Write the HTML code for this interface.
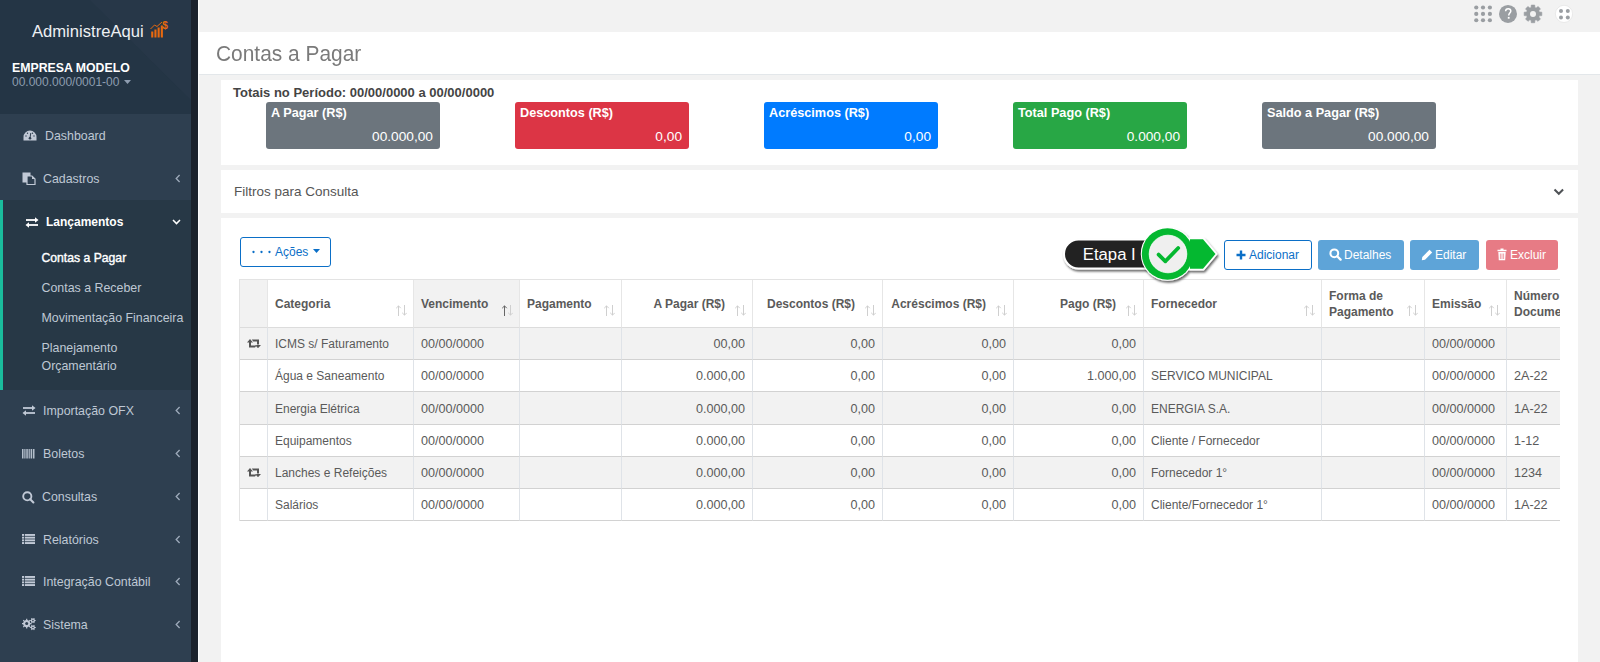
<!DOCTYPE html>
<html><head><meta charset="utf-8">
<style>
*{box-sizing:border-box;margin:0;padding:0}
html,body{width:1600px;height:662px;overflow:hidden;background:#f2f2f2;font-family:"Liberation Sans",sans-serif;position:relative}
.abs{position:absolute}
#sb{position:absolute;left:0;top:0;width:191px;height:662px;background:#2e3f50}
#sbh{position:absolute;left:0;top:0;width:191px;height:114px;background:#243545;overflow:hidden}
#strip{position:absolute;left:191px;top:0;width:7px;height:662px;background:#1b222c}
#wline{position:absolute;left:198px;top:0;width:1px;height:662px;background:#fbfbfb}
.mi{position:absolute;left:0;width:191px;height:43px;color:#bfc8d4;font-size:12.4px;line-height:45px}
.mi .t{position:absolute;left:43px;top:0}
.mi .ic{position:absolute;left:22px;top:15px;width:14px;height:14px}
.mi .ch{position:absolute;left:175px;top:17px;width:6px;height:9px}
.sub{position:absolute;left:41.5px;font-size:12.4px;color:#bfc8d4;line-height:18px;white-space:nowrap}
#hdr{position:absolute;left:199px;top:32px;width:1401px;height:43px;background:#fff;border-bottom:1px solid #e3e7ea}
.panel{position:absolute;left:221px;width:1357px;background:#fff}
.card{position:absolute;top:102px;width:174px;height:47px;border-radius:3px;color:#fff}
.card .ct{position:absolute;left:5px;top:4px;font-size:12.7px;font-weight:bold}
.card .cv{position:absolute;right:7px;top:26.5px;font-size:13.7px}
.btn{position:absolute;top:240px;height:30px;border-radius:3px;font-size:12px;line-height:30px;color:#fff;white-space:nowrap}
table{border-collapse:separate;border-spacing:0;table-layout:fixed}
#tw{position:absolute;left:239px;top:279px;width:1321px;height:260px;overflow:hidden}
td.n{font-size:12.6px}
td,th{border-right:1px solid #dfe3e8;border-bottom:1px solid #d2d2d2;height:32px;font-size:12px;color:#5a5a5a;white-space:nowrap;overflow:hidden;padding:1px 7px 0 7px;vertical-align:middle}
th{height:48px;font-weight:bold;text-align:left;position:relative;line-height:16px;border-bottom:1px solid #dcdcdc;border-right-color:#e6e6e6;padding-right:27px}
th.r,td.r{text-align:right}
tr.g td,th.g{background:#f2f2f2}
td.ic{padding:0;text-align:center}
.si{position:absolute;right:6px;bottom:11px;width:12px;height:11px}
</style></head><body>

<!-- SIDEBAR -->
<div id="sb">
  <div id="sbh">
    <svg class="abs" style="left:0;top:0" width="191" height="114"><polygon points="90,0 191,0 191,114 205,114" fill="#29394a" opacity="0.7"/></svg>
    <div class="abs" style="left:32px;top:21.5px;font-size:16.6px;color:#eef0f3;white-space:nowrap">AdministreAqui</div>
    <svg class="abs" style="left:149px;top:19px" width="20" height="20" viewBox="0 0 20 20">
      <rect x="2.2" y="12.5" width="2.1" height="6" fill="#e8690f"/>
      <rect x="5.4" y="10.5" width="2.1" height="8" fill="#e8690f"/>
      <rect x="8.6" y="8.5" width="2.1" height="10" fill="#e8690f"/>
      <rect x="11.8" y="6.5" width="2.1" height="12" fill="#e8690f"/>
      <polyline points="1.5,10 5.5,6 8,7.5 13,3" stroke="#e8690f" stroke-width="1" fill="none"/>
      <text x="13.2" y="10" font-size="10" font-weight="bold" fill="#e8690f" font-family="Liberation Sans">$</text>
    </svg>
    <div class="abs" style="left:12px;top:60.5px;font-size:12.3px;font-weight:bold;color:#fff;white-space:nowrap">EMPRESA MODELO</div>
    <div class="abs" style="left:12px;top:75px;font-size:12px;color:#8e9db0;white-space:nowrap">00.000.000/0001-00</div>
    <svg class="abs" style="left:124px;top:80px" width="8" height="5"><polygon points="0,0 7,0 3.5,4" fill="#8e9db0"/></svg>
  </div>
  <div id="menu">
  <div class="mi" style="top:114px"><svg class="ic" style="left:23px;top:16px;width:14px;height:11px" viewBox="0 0 14 11"><path d="M7,0.5 A6.5,6.5 0 0 0 0.5,7 L0.5,10.5 L13.5,10.5 L13.5,7 A6.5,6.5 0 0 0 7,0.5 Z" fill="#c1c9d6"/><circle cx="7" cy="8.2" r="1.3" fill="#2e3f50"/><line x1="7" y1="8" x2="7.8" y2="3" stroke="#2f3e4f" stroke-width="1"/><circle cx="3" cy="6" r=".7" fill="#2e3f50"/><circle cx="11" cy="6" r=".7" fill="#2e3f50"/><circle cx="4.5" cy="3.3" r=".7" fill="#2e3f50"/><circle cx="9.5" cy="3.3" r=".7" fill="#2e3f50"/></svg><span class="t" style="left:45px">Dashboard</span></div>
  <div class="mi" style="top:157px"><svg class="ic" style="left:22px;top:15px;width:14px;height:13px" viewBox="0 0 14 13"><rect x="0.5" y="0.5" width="8" height="10" fill="#c1c9d6"/><path d="M5,4 L10,4 L13,7 L13,12.5 L5,12.5 Z" fill="#2e3f50" stroke="#c1c9d6" stroke-width="1.2"/><path d="M10,4 L10,7 L13,7" fill="#c1c9d6"/></svg><span class="t">Cadastros</span><svg class="ch" viewBox="0 0 6 9"><polyline points="4.6,1 1.2,4.5 4.6,8" stroke="#9eabbb" stroke-width="1.3" fill="none"/></svg></div>
  <div class="abs" style="left:0;top:200px;width:191px;height:190px;background:#273846"></div>
  <div class="abs" style="left:0;top:200px;width:3px;height:190px;background:#1abc9c"></div>
  <div class="mi" style="top:200px;color:#fff;font-weight:bold;font-size:12px"><svg class="ic" style="left:25px;top:17px;width:14px;height:11px" viewBox="0 0 14 11"><path d="M1,3 H11" stroke="#fff" stroke-width="1.8"/><path d="M10,0.2 L13.5,3 L10,5.8 Z" fill="#fff"/><path d="M3,8 H13" stroke="#fff" stroke-width="1.8"/><path d="M4,5.2 L0.5,8 L4,10.8 Z" fill="#fff"/></svg><span class="t" style="left:46px">Lançamentos</span><svg class="ch" style="left:172px;top:19px;width:9px;height:6px" viewBox="0 0 9 6"><polyline points="1,1 4.5,4.6 8,1" stroke="#fff" stroke-width="1.5" fill="none"/></svg></div>
  <div class="sub" style="top:249px;color:#fff;font-size:12.2px;-webkit-text-stroke:0.4px #fff">Contas a Pagar</div>
  <div class="sub" style="top:279px">Contas a Receber</div>
  <div class="sub" style="top:309px">Movimentação Financeira</div>
  <div class="sub" style="top:338.5px">Planejamento</div>
  <div class="sub" style="top:356.5px">Orçamentário</div>
  <div class="mi" style="top:389px"><svg class="ic" style="left:22px;top:16px;width:14px;height:11px" viewBox="0 0 14 11"><path d="M1,3 H11" stroke="#c1c9d6" stroke-width="1.8"/><path d="M10,0.2 L13.5,3 L10,5.8 Z" fill="#c1c9d6"/><path d="M3,8 H13" stroke="#c1c9d6" stroke-width="1.8"/><path d="M4,5.2 L0.5,8 L4,10.8 Z" fill="#c1c9d6"/></svg><span class="t">Importação OFX</span><svg class="ch" viewBox="0 0 6 9"><polyline points="4.6,1 1.2,4.5 4.6,8" stroke="#9eabbb" stroke-width="1.3" fill="none"/></svg></div>
  <div class="mi" style="top:432px"><svg class="ic" style="left:22px;top:16.5px;width:13px;height:10px" viewBox="0 0 13 10"><g fill="#b4bfcc"><rect x="0" y="0" width="1.5" height="9.5"/><rect x="2.3" y="0" width="1.2" height="9.5"/><rect x="4.3" y="0" width="1.5" height="9.5"/><rect x="6.6" y="0" width="1.2" height="9.5"/><rect x="8.6" y="0" width="1.5" height="9.5"/><rect x="10.9" y="0" width="1.6" height="9.5"/></g></svg><span class="t">Boletos</span><svg class="ch" viewBox="0 0 6 9"><polyline points="4.6,1 1.2,4.5 4.6,8" stroke="#9eabbb" stroke-width="1.3" fill="none"/></svg></div>
  <div class="mi" style="top:475px"><svg class="ic" style="left:22px;top:16px;width:13px;height:13px" viewBox="0 0 13 13"><circle cx="5.3" cy="5.3" r="4.1" stroke="#c1c9d6" stroke-width="1.9" fill="none"/><line x1="8.2" y1="8.2" x2="11.4" y2="11.4" stroke="#c1c9d6" stroke-width="2.1" stroke-linecap="round"/></svg><span class="t" style="left:42px">Consultas</span><svg class="ch" viewBox="0 0 6 9"><polyline points="4.6,1 1.2,4.5 4.6,8" stroke="#9eabbb" stroke-width="1.3" fill="none"/></svg></div>
  <div class="mi" style="top:518px"><svg class="ic" style="left:22px;top:16px;width:13px;height:11px" viewBox="0 0 13 11"><g fill="#c1c9d6"><rect x="0" y="0" width="2.2" height="1.9"/><rect x="3" y="0" width="10" height="1.9"/><rect x="0" y="2.7" width="2.2" height="1.9"/><rect x="3" y="2.7" width="10" height="1.9"/><rect x="0" y="5.4" width="2.2" height="1.9"/><rect x="3" y="5.4" width="10" height="1.9"/><rect x="0" y="8.1" width="2.2" height="1.9"/><rect x="3" y="8.1" width="10" height="1.9"/></g></svg><span class="t">Relatórios</span><svg class="ch" viewBox="0 0 6 9"><polyline points="4.6,1 1.2,4.5 4.6,8" stroke="#9eabbb" stroke-width="1.3" fill="none"/></svg></div>
  <div class="mi" style="top:560px"><svg class="ic" style="left:22px;top:16px;width:13px;height:11px" viewBox="0 0 13 11"><g fill="#c1c9d6"><rect x="0" y="0" width="2.2" height="1.9"/><rect x="3" y="0" width="10" height="1.9"/><rect x="0" y="2.7" width="2.2" height="1.9"/><rect x="3" y="2.7" width="10" height="1.9"/><rect x="0" y="5.4" width="2.2" height="1.9"/><rect x="3" y="5.4" width="10" height="1.9"/><rect x="0" y="8.1" width="2.2" height="1.9"/><rect x="3" y="8.1" width="10" height="1.9"/></g></svg><span class="t">Integração Contábil</span><svg class="ch" viewBox="0 0 6 9"><polyline points="4.6,1 1.2,4.5 4.6,8" stroke="#9eabbb" stroke-width="1.3" fill="none"/></svg></div>
  <div class="mi" style="top:603px"><svg class="ic" style="left:22px;top:15px;width:14px;height:13px" viewBox="0 0 14 13"><path d="M8.03,4.22 L8.25,4.98 L9.57,5.02 L9.57,6.18 L8.25,6.22 L8.03,6.98 L7.65,7.67 L8.55,8.63 L7.73,9.45 L6.77,8.55 L6.08,8.93 L5.32,9.15 L5.28,10.47 L4.12,10.47 L4.08,9.15 L3.32,8.93 L2.63,8.55 L1.67,9.45 L0.85,8.63 L1.75,7.67 L1.37,6.98 L1.15,6.22 L-0.17,6.18 L-0.17,5.02 L1.15,4.98 L1.37,4.22 L1.75,3.53 L0.85,2.57 L1.67,1.75 L2.63,2.65 L3.32,2.27 L4.08,2.05 L4.12,0.73 L5.28,0.73 L5.32,2.05 L6.08,2.27 L6.77,2.65 L7.73,1.75 L8.55,2.57 L7.65,3.53 Z" fill="#c1c9d6"/><circle cx="4.7" cy="5.6" r="1.5" fill="#2e3f50"/><path d="M12.72,1.55 L12.94,2.12 L13.76,2.15 L13.76,3.05 L12.94,3.08 L12.72,3.65 L12.34,4.13 L12.73,4.85 L11.94,5.31 L11.51,4.61 L10.90,4.70 L10.29,4.61 L9.86,5.31 L9.07,4.85 L9.46,4.13 L9.08,3.65 L8.86,3.08 L8.04,3.05 L8.04,2.15 L8.86,2.12 L9.08,1.55 L9.46,1.07 L9.07,0.35 L9.86,-0.11 L10.29,0.59 L10.90,0.50 L11.51,0.59 L11.94,-0.11 L12.73,0.35 L12.34,1.07 Z" fill="#c1c9d6"/><circle cx="10.9" cy="2.6" r="0.8" fill="#2e3f50"/><path d="M12.72,8.45 L12.94,9.02 L13.76,9.05 L13.76,9.95 L12.94,9.98 L12.72,10.55 L12.34,11.03 L12.73,11.75 L11.94,12.21 L11.51,11.51 L10.90,11.60 L10.29,11.51 L9.86,12.21 L9.07,11.75 L9.46,11.03 L9.08,10.55 L8.86,9.98 L8.04,9.95 L8.04,9.05 L8.86,9.02 L9.08,8.45 L9.46,7.97 L9.07,7.25 L9.86,6.79 L10.29,7.49 L10.90,7.40 L11.51,7.49 L11.94,6.79 L12.73,7.25 L12.34,7.97 Z" fill="#c1c9d6"/><circle cx="10.9" cy="9.5" r="0.8" fill="#2e3f50"/></svg><span class="t">Sistema</span><svg class="ch" viewBox="0 0 6 9"><polyline points="4.6,1 1.2,4.5 4.6,8" stroke="#9eabbb" stroke-width="1.3" fill="none"/></svg></div>
</div>
</div>
<div id="strip"></div>
<div id="wline"></div>

<!-- TOPBAR + HEADER -->
<div id="hdr"><div class="abs" style="left:17px;top:8.5px;font-size:22px;color:#7a7a7a;white-space:nowrap;transform:scaleX(0.95);transform-origin:0 0">Contas a Pagar</div></div>

<!-- PANELS -->
<div class="panel" style="top:80px;height:85px"></div>
<div class="panel" style="top:170px;height:43px"></div>
<div class="panel" style="top:218px;height:444px"></div>


<!-- TOP ICONS -->
<svg class="abs" style="left:1470px;top:3px" width="104" height="22" viewBox="0 0 104 22">
  <g fill="#9a9ea2">
    <circle cx="6.25" cy="4.5" r="2.1"/><circle cx="13" cy="4.5" r="2.1"/><circle cx="19.9" cy="4.5" r="2.1"/>
    <circle cx="6.25" cy="10.9" r="2.1"/><circle cx="13" cy="10.9" r="2.1"/><circle cx="19.9" cy="10.9" r="2.1"/>
    <circle cx="6.25" cy="17.25" r="2.1"/><circle cx="13" cy="17.25" r="2.1"/><circle cx="19.9" cy="17.25" r="2.1"/>
    <circle cx="38" cy="10.9" r="9"/>
  </g>
  <path d="M35.6,8.3 C35.6,6.6 36.7,5.7 38.2,5.7 C39.8,5.7 40.8,6.6 40.8,8 C40.8,9.9 38.7,10.2 38.7,12.4" stroke="#fff" stroke-width="1.5" fill="none"/>
  <rect x="37.8" y="13.9" width="1.8" height="1.8" fill="#fff"/>
  <g transform="translate(63,10.9)">
    <path fill="#9a9ea2" stroke="#9a9ea2" stroke-width="0.6" stroke-linejoin="round" d="M-2.53,-6.10 L-1.93,-6.31 L-1.72,-8.83 L1.72,-8.83 L1.93,-6.31 L2.53,-6.10 L3.10,-5.83 L5.03,-7.46 L7.46,-5.03 L5.83,-3.10 L6.10,-2.53 L6.31,-1.93 L8.83,-1.72 L8.83,1.72 L6.31,1.93 L6.10,2.53 L5.83,3.10 L7.46,5.03 L5.03,7.46 L3.10,5.83 L2.53,6.10 L1.93,6.31 L1.72,8.83 L-1.72,8.83 L-1.93,6.31 L-2.53,6.10 L-3.10,5.83 L-5.03,7.46 L-7.46,5.03 L-5.83,3.10 L-6.10,2.53 L-6.31,1.93 L-8.83,1.72 L-8.83,-1.72 L-6.31,-1.93 L-6.10,-2.53 L-5.83,-3.10 L-7.46,-5.03 L-5.03,-7.46 L-3.10,-5.83 Z"/>
    <circle r="3" fill="#f2f2f2"/>
  </g>
  <circle cx="94" cy="10.9" r="8.6" fill="#fff" stroke="#e2e2e2" stroke-width="0.7"/>
  <g fill="#9a9ea2"><circle cx="91" cy="8.1" r="2"/><circle cx="97.8" cy="8.1" r="2"/><circle cx="91" cy="14.4" r="2"/><circle cx="97.8" cy="14.4" r="2"/></g>
</svg>

<!-- TOTALS -->
<div class="abs" style="left:233px;top:85px;font-size:13px;font-weight:bold;color:#444;white-space:nowrap">Totais no Período: 00/00/0000 a 00/00/0000</div>
<div class="card" style="left:266px;background:#6c757d"><div class="ct">A Pagar (R$)</div><div class="cv">00.000,00</div></div>
<div class="card" style="left:515px;background:#dc3545"><div class="ct">Descontos (R$)</div><div class="cv">0,00</div></div>
<div class="card" style="left:764px;background:#007bff"><div class="ct">Acréscimos (R$)</div><div class="cv">0,00</div></div>
<div class="card" style="left:1013px;background:#28a745"><div class="ct">Total Pago (R$)</div><div class="cv">0.000,00</div></div>
<div class="card" style="left:1262px;background:#6c757d"><div class="ct">Saldo a Pagar (R$)</div><div class="cv">00.000,00</div></div>

<!-- FILTERS -->
<div class="abs" style="left:234px;top:184px;font-size:13.5px;color:#555;white-space:nowrap">Filtros para Consulta</div>
<svg class="abs" style="left:1552.5px;top:188px" width="12" height="8" viewBox="0 0 12 8"><polyline points="1.5,1.5 5.8,5.8 10.1,1.5" stroke="#4f5256" stroke-width="2" fill="none"/></svg>

<!-- TOOLBAR -->
<div class="abs" style="left:240px;top:237px;width:91px;height:30px;border:1px solid #0b6fc7;border-radius:3px;color:#0b6fc7;font-size:12px;line-height:28px;white-space:nowrap">
  <svg class="abs" style="left:11px;top:12px" width="20" height="4"><circle cx="1.5" cy="2" r="1.15" fill="#0b6fc7"/><circle cx="9.5" cy="2" r="1.15" fill="#0b6fc7"/><circle cx="17.5" cy="2" r="1.15" fill="#0b6fc7"/></svg>
  <span class="abs" style="left:34px;top:0">Ações</span>
  <svg class="abs" style="left:72px;top:11px" width="8" height="5"><polygon points="0,0 7,0 3.5,4" fill="#0b6fc7"/></svg>
</div>

<div class="btn" style="left:1224px;width:88px;border:1px solid #0b6fc7;color:#0b6fc7;background:#fff;line-height:28px">
  <svg class="abs" style="left:11px;top:9px" width="10" height="10"><path d="M5,0.5 V9.5 M0.5,5 H9.5" stroke="#0b6fc7" stroke-width="2.4"/></svg>
  <span class="abs" style="left:24px;top:0">Adicionar</span>
</div>
<div class="btn" style="left:1318px;width:86px;background:#5ea4d8">
  <svg class="abs" style="left:11px;top:8px" width="13" height="13" viewBox="0 0 13 13"><circle cx="5.3" cy="5.3" r="3.9" stroke="#fff" stroke-width="2" fill="none"/><line x1="8.2" y1="8.2" x2="11.6" y2="11.6" stroke="#fff" stroke-width="2.3" stroke-linecap="round"/></svg>
  <span class="abs" style="left:26px;top:0">Detalhes</span>
</div>
<div class="btn" style="left:1410px;width:69px;background:#5ea4d8">
  <svg class="abs" style="left:11px;top:9px" width="12" height="12" viewBox="0 0 12 12"><path d="M8.5,0.8 L11.2,3.5 L4,10.7 L0.8,11.2 L1.3,8 Z" fill="#fff"/></svg>
  <span class="abs" style="left:25px;top:0">Editar</span>
</div>
<div class="btn" style="left:1486px;width:72px;background:#e77b85">
  <svg class="abs" style="left:11px;top:8px" width="10" height="13" viewBox="0 0 10 13"><path d="M3.5,0.5 H6.5 V1.8 H9.5 V3.3 H0.5 V1.8 H3.5 Z" fill="#fff"/><path d="M1.3,4 H8.7 L8.2,12.3 H1.8 Z" fill="#fff"/><path d="M3.4,5.5 V11 M5,5.5 V11 M6.6,5.5 V11" stroke="#e77b85" stroke-width="0.7"/></svg>
  <span class="abs" style="left:24px;top:0">Excluir</span>
</div>

<!-- TABLE -->
<div id="tw"><table style="width:1388px;border-left:1px solid #e3e3e3;border-top:1px solid #e3e3e3"><colgroup><col style="width:28px"><col style="width:146px"><col style="width:106px"><col style="width:102px"><col style="width:131px"><col style="width:130px"><col style="width:131px"><col style="width:130px"><col style="width:178px"><col style="width:103px"><col style="width:82px"><col style="width:120px"></colgroup><thead><tr><th class="g"></th><th class="">Categoria<svg class="si" viewBox="0 0 12 11"><path d="M3.5,11 V0.8 M1.2,3.2 L3.5,0.9 L5.8,3.2" stroke="#cfcfcf" stroke-width="1" fill="none"/><path d="M9.5,0 V10.2 M7.2,7.8 L9.5,10.1 L11.8,7.8" stroke="#cfcfcf" stroke-width="1" fill="none"/></svg></th><th class="g">Vencimento<svg class="si" viewBox="0 0 12 11"><path d="M3.5,11 V0.8 M1.2,3.2 L3.5,0.9 L5.8,3.2" stroke="#666" stroke-width="1" fill="none"/><path d="M9.5,0 V10.2 M7.2,7.8 L9.5,10.1 L11.8,7.8" stroke="#cfcfcf" stroke-width="1" fill="none"/></svg></th><th class="">Pagamento<svg class="si" viewBox="0 0 12 11"><path d="M3.5,11 V0.8 M1.2,3.2 L3.5,0.9 L5.8,3.2" stroke="#cfcfcf" stroke-width="1" fill="none"/><path d="M9.5,0 V10.2 M7.2,7.8 L9.5,10.1 L11.8,7.8" stroke="#cfcfcf" stroke-width="1" fill="none"/></svg></th><th class="r">A Pagar (R$)<svg class="si" viewBox="0 0 12 11"><path d="M3.5,11 V0.8 M1.2,3.2 L3.5,0.9 L5.8,3.2" stroke="#cfcfcf" stroke-width="1" fill="none"/><path d="M9.5,0 V10.2 M7.2,7.8 L9.5,10.1 L11.8,7.8" stroke="#cfcfcf" stroke-width="1" fill="none"/></svg></th><th class="r">Descontos (R$)<svg class="si" viewBox="0 0 12 11"><path d="M3.5,11 V0.8 M1.2,3.2 L3.5,0.9 L5.8,3.2" stroke="#cfcfcf" stroke-width="1" fill="none"/><path d="M9.5,0 V10.2 M7.2,7.8 L9.5,10.1 L11.8,7.8" stroke="#cfcfcf" stroke-width="1" fill="none"/></svg></th><th class="r">Acréscimos (R$)<svg class="si" viewBox="0 0 12 11"><path d="M3.5,11 V0.8 M1.2,3.2 L3.5,0.9 L5.8,3.2" stroke="#cfcfcf" stroke-width="1" fill="none"/><path d="M9.5,0 V10.2 M7.2,7.8 L9.5,10.1 L11.8,7.8" stroke="#cfcfcf" stroke-width="1" fill="none"/></svg></th><th class="r">Pago (R$)<svg class="si" viewBox="0 0 12 11"><path d="M3.5,11 V0.8 M1.2,3.2 L3.5,0.9 L5.8,3.2" stroke="#cfcfcf" stroke-width="1" fill="none"/><path d="M9.5,0 V10.2 M7.2,7.8 L9.5,10.1 L11.8,7.8" stroke="#cfcfcf" stroke-width="1" fill="none"/></svg></th><th class="">Fornecedor<svg class="si" viewBox="0 0 12 11"><path d="M3.5,11 V0.8 M1.2,3.2 L3.5,0.9 L5.8,3.2" stroke="#cfcfcf" stroke-width="1" fill="none"/><path d="M9.5,0 V10.2 M7.2,7.8 L9.5,10.1 L11.8,7.8" stroke="#cfcfcf" stroke-width="1" fill="none"/></svg></th><th class="">Forma de<br>Pagamento<svg class="si" viewBox="0 0 12 11"><path d="M3.5,11 V0.8 M1.2,3.2 L3.5,0.9 L5.8,3.2" stroke="#cfcfcf" stroke-width="1" fill="none"/><path d="M9.5,0 V10.2 M7.2,7.8 L9.5,10.1 L11.8,7.8" stroke="#cfcfcf" stroke-width="1" fill="none"/></svg></th><th class="">Emissão<svg class="si" viewBox="0 0 12 11"><path d="M3.5,11 V0.8 M1.2,3.2 L3.5,0.9 L5.8,3.2" stroke="#cfcfcf" stroke-width="1" fill="none"/><path d="M9.5,0 V10.2 M7.2,7.8 L9.5,10.1 L11.8,7.8" stroke="#cfcfcf" stroke-width="1" fill="none"/></svg></th><th class="">Número<br>Documento</th></tr></thead><tbody><tr class="g"><td class="ic"><svg width="14" height="9" viewBox="0 0 14 9" style="display:block;margin:0 auto"><path d="M0,3.6 L3,0 L6,3.6 Z M2,3.5 H4 V6.6 H9.5 L8,8.6 H2 Z M8,6 L11,9.2 L14,6 Z M10,5.6 H12 V0.5 H4.8 L6.2,2.5 H10 Z" fill="#555"/></svg></td><td class="">ICMS s/ Faturamento</td><td class="n">00/00/0000</td><td class=""></td><td class="r n">00,00</td><td class="r n">0,00</td><td class="r n">0,00</td><td class="r n">0,00</td><td class=""></td><td class=""></td><td class="n">00/00/0000</td><td class=""></td></tr><tr class=""><td class="ic"></td><td class="">Água e Saneamento</td><td class="n">00/00/0000</td><td class=""></td><td class="r n">0.000,00</td><td class="r n">0,00</td><td class="r n">0,00</td><td class="r n">1.000,00</td><td class="">SERVICO MUNICIPAL</td><td class=""></td><td class="n">00/00/0000</td><td class="n">2A-22</td></tr><tr class="g" style="height:33px"><td class="ic"></td><td class="">Energia Elétrica</td><td class="n">00/00/0000</td><td class=""></td><td class="r n">0.000,00</td><td class="r n">0,00</td><td class="r n">0,00</td><td class="r n">0,00</td><td class="">ENERGIA S.A.</td><td class=""></td><td class="n">00/00/0000</td><td class="n">1A-22</td></tr><tr class=""><td class="ic"></td><td class="">Equipamentos</td><td class="n">00/00/0000</td><td class=""></td><td class="r n">0.000,00</td><td class="r n">0,00</td><td class="r n">0,00</td><td class="r n">0,00</td><td class="">Cliente / Fornecedor</td><td class=""></td><td class="n">00/00/0000</td><td class="n">1-12</td></tr><tr class="g"><td class="ic"><svg width="14" height="9" viewBox="0 0 14 9" style="display:block;margin:0 auto"><path d="M0,3.6 L3,0 L6,3.6 Z M2,3.5 H4 V6.6 H9.5 L8,8.6 H2 Z M8,6 L11,9.2 L14,6 Z M10,5.6 H12 V0.5 H4.8 L6.2,2.5 H10 Z" fill="#555"/></svg></td><td class="">Lanches e Refeições</td><td class="n">00/00/0000</td><td class=""></td><td class="r n">0.000,00</td><td class="r n">0,00</td><td class="r n">0,00</td><td class="r n">0,00</td><td class="">Fornecedor 1°</td><td class=""></td><td class="n">00/00/0000</td><td class="n">1234</td></tr><tr class=""><td class="ic"></td><td class="">Salários</td><td class="n">00/00/0000</td><td class=""></td><td class="r n">0.000,00</td><td class="r n">0,00</td><td class="r n">0,00</td><td class="r n">0,00</td><td class="">Cliente/Fornecedor 1°</td><td class=""></td><td class="n">00/00/0000</td><td class="n">1A-22</td></tr></tbody></table></div>
<!-- ETAPA BADGE -->
<svg class="abs" style="left:1055px;top:222px;z-index:5" width="175" height="66" viewBox="0 0 175 66">
  <defs><filter id="sh" x="-20%" y="-30%" width="140%" height="160%"><feDropShadow dx="1.2" dy="2" stdDeviation="1.1" flood-color="#000" flood-opacity="0.6"/></filter></defs>
  <g filter="url(#sh)">
    <rect x="9" y="17.5" width="110" height="29" rx="14.5" fill="#222" stroke="#fff" stroke-width="2"/>
  </g>
  <text x="27.8" y="38.2" font-family="Liberation Sans" font-size="16.7" fill="#fff">Etapa I</text>
  <g filter="url(#sh)">
    <circle cx="112.5" cy="32" r="25.7" fill="#fff" stroke="#fff" stroke-width="2"/>
    <path d="M135,17.2 L148,17.2 L160.5,32 L148,46.8 L135,46.8 Z" fill="#fff" stroke="#fff" stroke-width="3.4" stroke-linejoin="round"/>
  </g>
  <circle cx="112.5" cy="32" r="25.7" fill="#04b830"/>
  <path d="M135,17.2 L148,17.2 L160.5,32 L148,46.8 L135,46.8 Z" fill="#04b830"/>
  <circle cx="113" cy="32" r="18.8" fill="#efefef" stroke="#fff" stroke-width="0.8"/>
  <polyline points="103.6,32.6 110.4,39.3 123.2,26" stroke="#04b830" stroke-width="3.8" fill="none" stroke-linecap="round" stroke-linejoin="round"/>
</svg>
</body></html>
